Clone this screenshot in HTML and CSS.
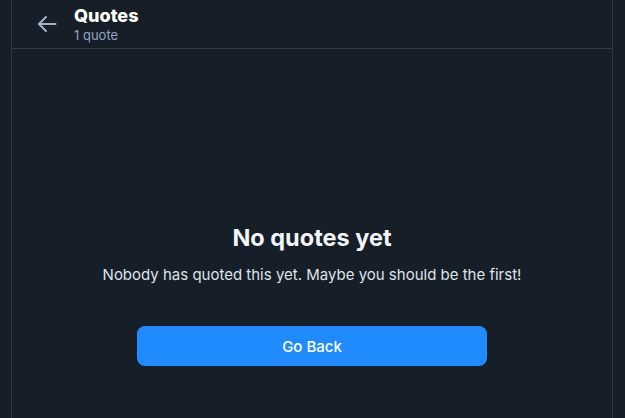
FILE: index.html
```html
<!DOCTYPE html>
<html>
<head>
<meta charset="utf-8">
<link rel="stylesheet" href="styles.css">
</head>
<body>
<div class="column">
  <header class="header">
    <button class="back" aria-label="Back">
      <svg width="22" height="22" viewBox="0 0 22 22" fill="none" stroke="currentColor" stroke-width="2" stroke-linecap="round" stroke-linejoin="round"><path d="M19.5 11H3"/><path d="M10 4l-7 7 7 7"/></svg>
    </button>
    <div class="titles">
      <div class="title">Quotes</div>
      <div class="subtitle">1 quote</div>
    </div>
  </header>
  <main class="empty">
    <h2 class="empty-title">No quotes yet</h2>
    <p class="empty-text">Nobody has quoted this yet. Maybe you should be the first!</p>
    <button class="primary">Go Back</button>
  </main>
</div>
</body>
</html>
```
FILE: styles.css
```css
html, body {
  margin: 0;
  padding: 0;
  height: 100%;
  background: #161e28;
  font-family: Inter, "Noto Sans", sans-serif;
  color: #f1f3f5;
}
.column {
  margin-left: 11px;
  width: 600px;
  height: 100%;
  border-left: 1px solid #2c3848;
  border-right: 1px solid #2c3848;
  display: flex;
  flex-direction: column;
}
.header {
  height: 48px;
  border-bottom: 1px solid #2f3c4d;
  display: flex;
  align-items: center;
  padding-left: 24px;
  gap: 16px;
}
.back {
  background: none;
  border: 0;
  padding: 0;
  width: 22px;
  height: 22px;
  display: flex;
  align-items: center;
  justify-content: center;
  color: #a3b2c4;
}
.titles {
  display: flex;
  flex-direction: column;
  margin-top: -1px;
}
.title {
  font-size: 18px;
  font-weight: 800;
  line-height: 22px;
  color: #ffffff;
}
.subtitle {
  font-size: 13px;
  line-height: 16px;
  color: #8ea6c2;
}
.empty {
  display: flex;
  flex-direction: column;
  align-items: center;
  padding-top: 174px;
}
.empty-title {
  margin: 0;
  font-size: 23.5px;
  font-weight: 700;
  line-height: 30px;
  color: #f2f4f7;
}
.empty-text {
  margin: 12px 0 0;
  font-size: 15px;
  line-height: 20px;
  color: #dde3ea;
}
.primary {
  margin-top: 41px;
  width: 350px;
  height: 40px;
  border: 0;
  border-radius: 8px;
  background: #208bfe;
  color: #ffffff;
  font-family: Inter, "Noto Sans", sans-serif;
  font-size: 15px;
  font-weight: 500;
}
```
